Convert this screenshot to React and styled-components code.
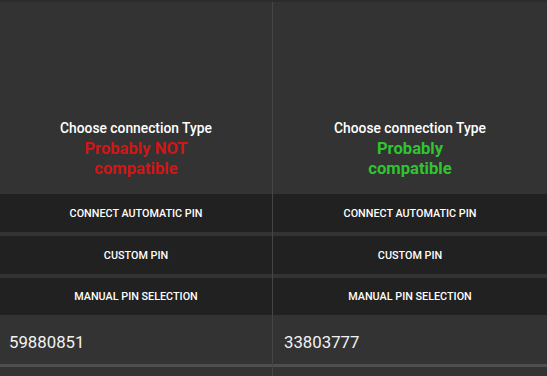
import React from "react";
import styled, { createGlobalStyle } from "styled-components";

const Global = createGlobalStyle`
    html, body {
        margin : 0;
        padding : 0;
        background-color : #333333;
        font-family : Roboto, "Noto Sans", sans-serif;
    }
`;

const Screen = styled.div`
    width : 547px;
    height : 376px;
    display : grid;
    grid-template-columns : 272px 1px 1fr;
    background-color : #333333;
    overflow : hidden;
    border-top : 2px solid #2b2b2b;
    box-sizing : border-box;
`;

const Divider = styled.div`
    background-color : #454545;
`;

const Column = styled.div`
    display : flex;
    flex-direction : column;
`;

const Header = styled.div`
    height : 192px;
    display : flex;
    flex-direction : column;
    justify-content : flex-end;
    align-items : center;
    padding-bottom : 15px;
    box-sizing : border-box;
    text-align : center;
`;

const Title = styled.div`
    color : #ffffff;
    font-size : 13.8px;
    font-weight : 500;
    line-height : 18px;
    margin-bottom : 2px;
`;

const Status = styled.div`
    color : ${props => props.ok ? "#2fc52f" : "#d01616"};
    font-size : 16.6px;
    font-weight : 700;
    line-height : 20px;
`;

const ButtonList = styled.div`
    display : flex;
    flex-direction : column;
    gap : 4px;
`;

const Button = styled.div`
    height : 38px;
    background-color : #212121;
    color : #ffffff;
    display : flex;
    justify-content : center;
    align-items : center;
    font-size : 10.8px;
    font-weight : 500;
    text-transform : uppercase;
    &:last-child {
        height : 37px;
    }
`;

const PinField = styled.div`
    height : 52px;
    display : flex;
    align-items : center;
    padding-left : ${props => props.pad}px;
    padding-top : 4px;
    box-sizing : border-box;
    color : #f2f2f2;
    font-size : 16.8px;
    border-bottom : 3px solid #4f4f4f;
`;

const devices = [
    { ok : false, status : ["Probably NOT", "compatible"], pin : "59880851", pad : 9 },
    { ok : true, status : ["Probably", "compatible"], pin : "33803777", pad : 11 },
];

const buttons = ["Connect automatic pin", "Custom pin", "Manual pin selection"];

function DeviceColumn({ device }) {
    return (
        <Column>
            <Header>
                <Title>Choose connection Type</Title>
                {device.status.map(line => (
                    <Status key={line} ok={device.ok}>{line}</Status>
                ))}
            </Header>
            <ButtonList>
                {buttons.map(b => <Button key={b}>{b}</Button>)}
            </ButtonList>
            <PinField pad={device.pad}>{device.pin}</PinField>
        </Column>
    );
}

export default function App() {
    return (
        <>
            <Global />
            <Screen>
                <DeviceColumn device={devices[0]} />
                <Divider />
                <DeviceColumn device={devices[1]} />
            </Screen>
        </>
    );
}
